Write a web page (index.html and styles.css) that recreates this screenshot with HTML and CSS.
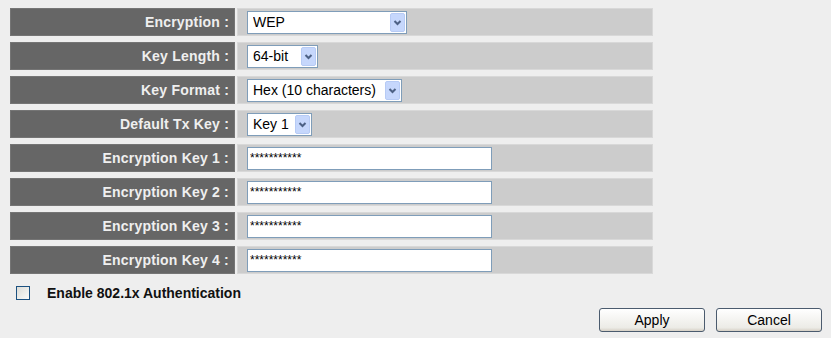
FILE: index.html
```html
<!doctype html>
<html lang="en">
  <head>
    <meta charset="UTF-8" />
    <title>Wireless security</title>
    <link rel="stylesheet" href="styles.css">
  </head>
  <body>
    <main class="c-page">
      <form class="c-form">
        <div class="c-form__grid">
          <label class="c-form__label" for="enc">Encryption :</label>
          <div class="c-form__value">
            <span class="c-select c-select--w160">
              <select id="enc"><option>WEP</option></select>
              <svg class="c-select__arrow" viewBox="0 0 15 19" aria-hidden="true"><rect x="0.5" y="0.5" width="14" height="18" rx="1.5" /><path d="M4.5 8 L7.5 11 L10.5 8" /></svg>
            </span>
          </div>

          <label class="c-form__label" for="len">Key Length :</label>
          <div class="c-form__value">
            <span class="c-select c-select--w71">
              <select id="len"><option>64-bit</option></select>
              <svg class="c-select__arrow" viewBox="0 0 15 19" aria-hidden="true"><rect x="0.5" y="0.5" width="14" height="18" rx="1.5" /><path d="M4.5 8 L7.5 11 L10.5 8" /></svg>
            </span>
          </div>

          <label class="c-form__label" for="fmt">Key Format :</label>
          <div class="c-form__value">
            <span class="c-select c-select--w155">
              <select id="fmt"><option>Hex (10 characters)</option></select>
              <svg class="c-select__arrow" viewBox="0 0 15 19" aria-hidden="true"><rect x="0.5" y="0.5" width="14" height="18" rx="1.5" /><path d="M4.5 8 L7.5 11 L10.5 8" /></svg>
            </span>
          </div>

          <label class="c-form__label" for="tx">Default Tx Key :</label>
          <div class="c-form__value">
            <span class="c-select c-select--w65">
              <select id="tx"><option>Key 1</option></select>
              <svg class="c-select__arrow" viewBox="0 0 15 19" aria-hidden="true"><rect x="0.5" y="0.5" width="14" height="18" rx="1.5" /><path d="M4.5 8 L7.5 11 L10.5 8" /></svg>
            </span>
          </div>

          <label class="c-form__label" for="k1">Encryption Key 1 :</label>
          <div class="c-form__value"><input class="c-input" id="k1" type="text" value="***********"></div>

          <label class="c-form__label" for="k2">Encryption Key 2 :</label>
          <div class="c-form__value"><input class="c-input" id="k2" type="text" value="***********"></div>

          <label class="c-form__label" for="k3">Encryption Key 3 :</label>
          <div class="c-form__value"><input class="c-input" id="k3" type="text" value="***********"></div>

          <label class="c-form__label" for="k4">Encryption Key 4 :</label>
          <div class="c-form__value"><input class="c-input" id="k4" type="text" value="***********"></div>
        </div>

        <label class="c-check">
          <input class="c-check__box" type="checkbox">
          <span>Enable 802.1x Authentication</span>
        </label>

        <div class="c-actions">
          <button class="c-button" type="button">Apply</button>
          <button class="c-button" type="button">Cancel</button>
        </div>
      </form>
    </main>
  </body>
</html>
```

FILE: styles.css
```css
html {
  background: #eeeeee;
}

body {
  margin: 0;
  font-family: 'Liberation Sans', Arial, sans-serif;
}

.c-page {
  padding: 8px 0 0 10px;
  width: 812px;
}

.c-form__grid {
  display: grid;
  grid-template-columns: 225px 416px;
  grid-auto-rows: 28px;
  column-gap: 2px;
  row-gap: 6px;
}

.c-form__label {
  display: flex;
  align-items: center;
  justify-content: flex-end;
  padding-right: 5px;

  background: #666666;
  border: 1px solid #757575;
  color: #efefef;
  font-size: 14px;
  font-weight: bold;
  letter-spacing: 0.2px;
}

.c-form__value {
  display: flex;
  align-items: center;
  padding-left: 9px;

  background: #cccccc;
  border: 1px solid #d8d8d8;
}

.c-select {
  position: relative;
  display: inline-block;
  height: 23px;
}

.c-select select {
  appearance: none;
  -webkit-appearance: none;
  width: 100%;
  height: 100%;
  margin: 0;
  padding: 0 0 0 5px;

  background: #fff;
  border: 1px solid #7f9db9;
  border-radius: 0;
  font-family: 'Liberation Sans', Arial, sans-serif;
  font-size: 14px;
  color: #000;
}

.c-select__arrow {
  position: absolute;
  top: 2px;
  right: 2px;
  width: 15px;
  height: 19px;
  pointer-events: none;
}

.c-select__arrow rect {
  fill: #c6d7fc;
  stroke: #b7cbf5;
}

.c-select__arrow path {
  fill: none;
  stroke: #4d6185;
  stroke-width: 2;
}

.c-select--w160 { width: 160px; }
.c-select--w71 { width: 71px; }
.c-select--w155 { width: 155px; }
.c-select--w65 { width: 65px; }

.c-input {
  box-sizing: border-box;
  width: 245px;
  height: 23px;
  margin: 0;
  padding: 0 2px;

  background: #fff;
  border: 1px solid #7f9db9;
  font-family: 'Liberation Sans', Arial, sans-serif;
  font-size: 12px;
  color: #000;
}

.c-check {
  display: flex;
  align-items: center;
  gap: 17px;
  margin: 11px 0 0 6px;

  font-size: 14px;
  font-weight: bold;
  color: #111;
}

.c-check__box {
  appearance: none;
  -webkit-appearance: none;
  width: 14px;
  height: 14px;
  margin: 0;

  background: linear-gradient(135deg, #dcdcd7, #fbfbf9);
  border: 1px solid #1c5180;
}

.c-actions {
  display: flex;
  justify-content: flex-end;
  gap: 11px;
  margin-top: 7px;
}

.c-button {
  width: 106px;
  height: 24px;

  background: linear-gradient(#ffffff, #ecebe6 85%, #d6d0c5);
  border: 1px solid #4b5b6e;
  border-radius: 3px;
  font-family: 'Liberation Sans', Arial, sans-serif;
  font-size: 14px;
  color: #000;
}
```
